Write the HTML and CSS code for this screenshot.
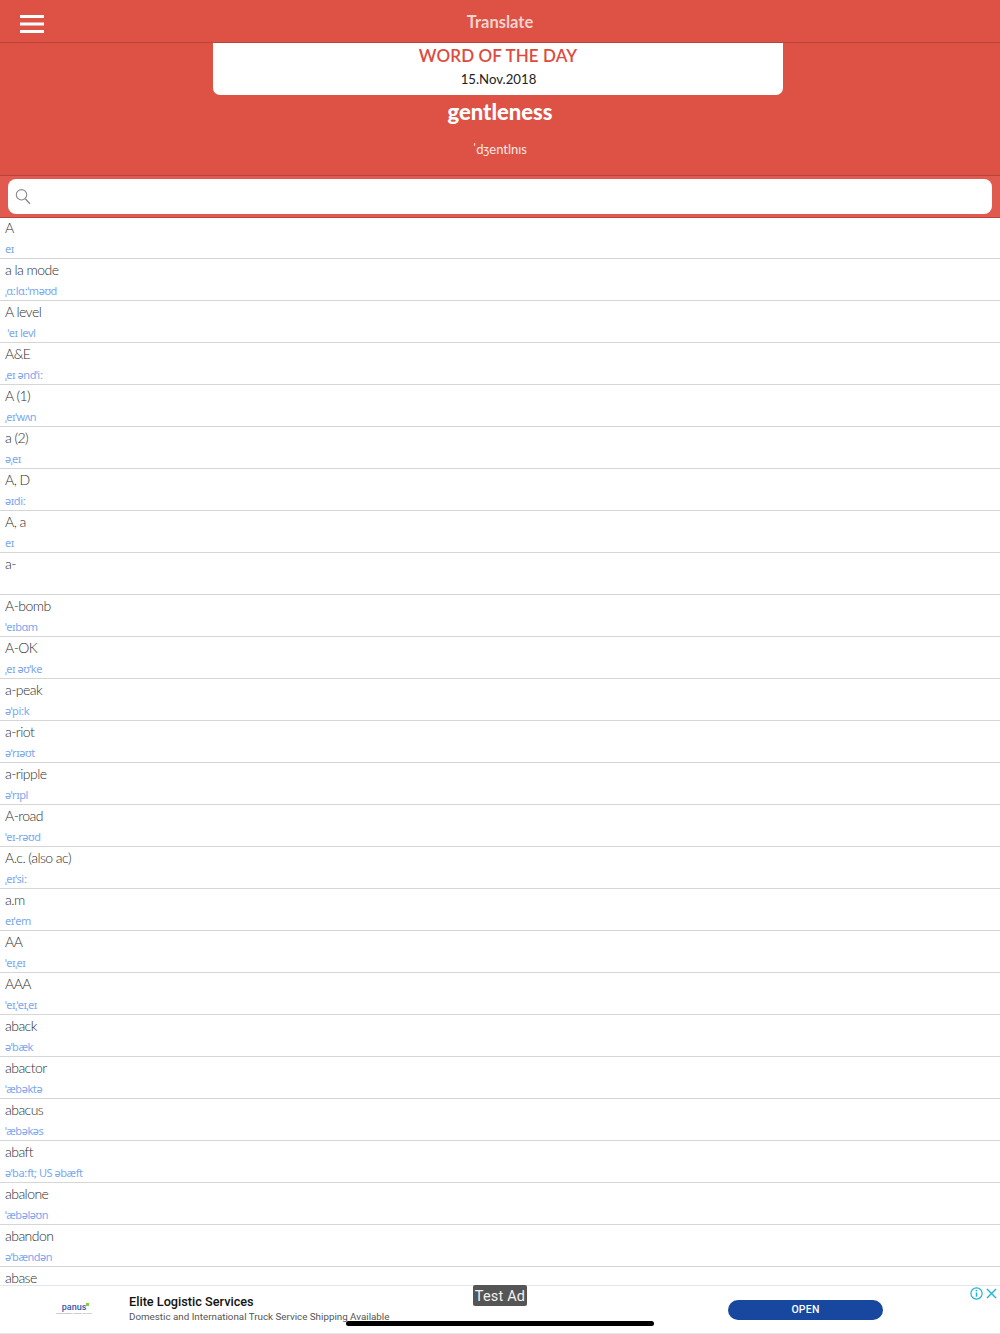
FILE: index.html
```html
<!DOCTYPE html>
<html lang="en">
<head>
<meta charset="utf-8">
<title>Translate</title>
<link rel="stylesheet" href="styles.css">
</head>
<body>
<div class="app">
  <header class="topbar">
    <button class="menu" aria-label="Menu">
      <svg width="24" height="20" viewBox="0 0 24 20"><path d="M0 2.5h24M0 10h24M0 17.5h24" stroke="#fff" stroke-width="3" fill="none"/></svg>
    </button>
    <h1 class="topbar-title">Translate</h1>
  </header>
  <section class="hero">
    <div class="wod-card">
      <div class="wod-title">WORD OF THE DAY</div>
      <div class="wod-date">15.Nov.2018</div>
    </div>
    <div class="wod-word">gentleness</div>
    <div class="wod-ipa">ˈdʒentlnɪs</div>
  </section>
  <div class="searchbar">
    <div class="searchbox">
      <svg width="16" height="17" viewBox="0 0 16 17"><circle cx="6.5" cy="6.8" r="5.2" fill="none" stroke="#8a8a8a" stroke-width="1.1"/><path d="M10.3 10.8l4.6 5" stroke="#8a8a8a" stroke-width="1.4" fill="none"/></svg>
    </div>
  </div>
  <ul class="list">
    <li class="row"><div class="word">A</div><div class="ipa">eɪ</div></li>
    <li class="row"><div class="word">a la mode</div><div class="ipa">ˌɑːlɑːˈməʊd</div></li>
    <li class="row"><div class="word">A level</div><div class="ipa">&nbsp;ˈeɪ levl</div></li>
    <li class="row"><div class="word">A&amp;E</div><div class="ipa">ˌeɪ əndˈiː</div></li>
    <li class="row"><div class="word">A (1)</div><div class="ipa">ˌeɪˈwʌn</div></li>
    <li class="row"><div class="word">a (2)</div><div class="ipa">əˌeɪ</div></li>
    <li class="row"><div class="word">A, D</div><div class="ipa">əɪdiː</div></li>
    <li class="row"><div class="word">A, a</div><div class="ipa">eɪ</div></li>
    <li class="row"><div class="word">a-</div><div class="ipa">&nbsp;</div></li>
    <li class="row"><div class="word">A-bomb</div><div class="ipa">ˈeɪbɑm</div></li>
    <li class="row"><div class="word">A-OK</div><div class="ipa">ˌeɪ əʊˈke</div></li>
    <li class="row"><div class="word">a-peak</div><div class="ipa">əˈpiːk</div></li>
    <li class="row"><div class="word">a-riot</div><div class="ipa">əˈrɪəʊt</div></li>
    <li class="row"><div class="word">a-ripple</div><div class="ipa">əˈrɪpl</div></li>
    <li class="row"><div class="word">A-road</div><div class="ipa">ˈeɪ-rəʊd</div></li>
    <li class="row"><div class="word">A.c. (also ac)</div><div class="ipa">ˌeɪˈsiː</div></li>
    <li class="row"><div class="word">a.m</div><div class="ipa">eɪˈem</div></li>
    <li class="row"><div class="word">AA</div><div class="ipa">ˈeɪˌeɪ</div></li>
    <li class="row"><div class="word">AAA</div><div class="ipa">ˈeɪˌˈeɪˌeɪ</div></li>
    <li class="row"><div class="word">aback</div><div class="ipa">əˈbæk</div></li>
    <li class="row"><div class="word">abactor</div><div class="ipa">ˈæbəktə</div></li>
    <li class="row"><div class="word">abacus</div><div class="ipa">ˈæbəkəs</div></li>
    <li class="row"><div class="word">abaft</div><div class="ipa">əˈbaːft; US əbæft</div></li>
    <li class="row"><div class="word">abalone</div><div class="ipa">ˈæbələʊn</div></li>
    <li class="row"><div class="word">abandon</div><div class="ipa">əˈbændən</div></li>
    <li class="row"><div class="word">abase</div><div class="ipa">əˈbeɪs</div></li>
  </ul>
  <aside class="ad">
    <div class="ad-logo">
      <span class="ad-logo-name">panus<i class="ad-logo-dot"></i></span>
      <span class="ad-logo-tag">Transportation Logistic Services</span>
    </div>
    <div class="ad-copy">
      <div class="ad-title">Elite Logistic Services</div>
      <div class="ad-desc">Domestic and International Truck Service Shipping Available</div>
    </div>
    <div class="ad-action"><span class="ad-open">OPEN</span></div>
    <div class="ad-choices">
      <svg width="13" height="13" viewBox="0 0 13 13"><circle cx="6.5" cy="6.5" r="5.6" fill="none" stroke="#1fb4d6" stroke-width="1.2"/><path d="M6.5 5.5v4.2" stroke="#1fb4d6" stroke-width="1.5"/><circle cx="6.5" cy="3.6" r=".9" fill="#1fb4d6"/></svg>
      <svg width="11" height="11" viewBox="0 0 11 11"><path d="M1 1l9 9M10 1l-9 9" stroke="#1fb4d6" stroke-width="1.4" fill="none"/></svg>
    </div>
  </aside>
  <div class="test-ad">Test Ad</div>
  <div class="home-indicator"></div>
</div>
</body>
</html>
```
FILE: styles.css
```css
* { box-sizing: border-box; }
html, body { margin: 0; padding: 0; background: #fff; }
.app {
  position: relative;
  width: 1000px;
  height: 1334px;
  overflow: hidden;
  font-family: Lato, "Noto Sans", sans-serif;
  background: #fff;
}
.topbar {
  height: 43px;
  background: #de5246;
  border-bottom: 1px solid #b9443b;
  display: flex;
  align-items: center;
  justify-content: center;
  position: relative;
}
.menu {
  position: absolute;
  left: 20px;
  top: 14px;
  padding: 0;
  border: 0;
  background: none;
  line-height: 0;
}
.topbar-title {
  margin: 1px 0 0;
  font-size: 16.5px;
  font-weight: 700;
  color: #f3d3cf;
}
.hero {
  height: 132px;
  background: #de5246;
  display: flex;
  flex-direction: column;
  align-items: center;
}
.wod-card {
  width: 570px;
  height: 52px;
  margin-right: 4px;
  background: #fff;
  border-radius: 0 0 7px 7px;
  display: flex;
  flex-direction: column;
  align-items: center;
  padding-top: 2px;
}
.wod-title {
  font-size: 17px;
  font-weight: 600;
  line-height: 21px;
  letter-spacing: .1px;
  color: #df4a40;
}
.wod-date {
  font-size: 13.2px;
  line-height: 18px;
  margin-top: 4px;
  margin-left: 1px;
  color: #222;
}
.wod-word {
  margin-top: 4px;
  font-size: 22px;
  font-weight: 900;
  line-height: 26px;
  color: #fff;
}
.wod-ipa {
  margin-top: 14px;
  font-size: 13px;
  font-weight: 400;
  line-height: 20px;
  color: #fbe6e3;
}
.searchbar {
  height: 43px;
  background: #e15a4f;
  border-top: 1px solid #b9443b;
  border-bottom: 1px solid #b9443b;
  padding: 3px 8px 3px;
}
.searchbox {
  height: 35px;
  background: #fff;
  border-radius: 8px;
  display: flex;
  align-items: center;
  padding-left: 7px;
}
.list { margin: 0; padding: 0; list-style: none; }
.row {
  height: 42px;
  padding: 2px 5px 0;
  border-bottom: 1px solid #d6d6d6;
}
.row:first-child { height: 41px; padding-top: 1px; }
.word {
  font-size: 14px;
  font-weight: 300;
  line-height: 18px;
  letter-spacing: -.55px;
  color: #2e2e2e;
}
.ipa {
  margin-top: 4px;
  font-family: "Noto Sans", sans-serif;
  font-size: 11px;
  font-weight: 400;
  line-height: 16px;
  letter-spacing: -.45px;
  color: #7ca8f0;
}
.ad {
  position: absolute;
  left: 0;
  right: 0;
  top: 1285px;
  height: 49px;
  background: #fff;
  border-top: 1px solid #e6e6e6;
  border-bottom: 1px solid #e6e6e6;
  display: flex;
  align-items: center;
  font-family: Roboto, sans-serif;
}
.ad-logo {
  width: 129px;
  display: flex;
  flex-direction: column;
  align-items: center;
  padding: 0 0 1px 19px;
}
.ad-logo-name {
  font-size: 9px;
  font-weight: 500;
  line-height: 9px;
  color: #3c57a8;
  position: relative;
}
.ad-logo-dot {
  position: absolute;
  right: -3px;
  top: 0;
  width: 3px;
  height: 3px;
  background: #8fc73e;
}
.ad-logo-tag {
  font-size: 2.5px;
  line-height: 3px;
  color: #888;
  white-space: nowrap;
}
.ad-copy { width: 599px; padding-bottom: 2px; }
.ad-title {
  font-size: 12.7px;
  font-weight: 500;
  line-height: 15px;
  margin-bottom: 1px;
  color: #111;
}
.ad-desc {
  font-size: 9.8px;
  line-height: 14px;
  color: #555;
}
.ad-action { width: 155px; }
.ad-open {
  display: block;
  height: 20px;
  border-radius: 10px;
  background: #17479e;
  color: #fff;
  font-size: 10.5px;
  font-weight: 500;
  line-height: 20px;
  text-align: center;
  letter-spacing: .2px;
}
.ad-choices {
  position: absolute;
  right: 3px;
  top: 1px;
  display: flex;
  align-items: center;
  gap: 3px;
}
.test-ad {
  position: absolute;
  left: 473px;
  top: 1285px;
  width: 54px;
  height: 21px;
  border-radius: 2px;
  background: #555;
  color: #f2f2f2;
  font-family: Roboto, sans-serif;
  font-size: 14.5px;
  line-height: 23px;
  text-align: center;
  letter-spacing: .2px;
}
.home-indicator {
  position: absolute;
  left: 346px;
  top: 1321px;
  width: 308px;
  height: 5px;
  border-radius: 3px;
  background: #000;
}
```
